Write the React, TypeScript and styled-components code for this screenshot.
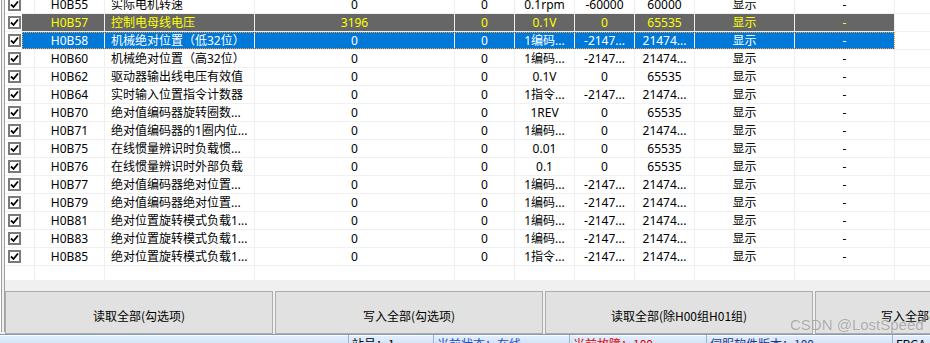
import styled, { createGlobalStyle } from "styled-components";

type RowState = "normal" | "marked" | "selected";

interface Param {
  code: string;
  name: string;
  value: string;
  def: string;
  unit: string;
  min: string;
  max: string;
  state?: RowState;
}

const params: Param[] = [
  { code: "H0B55", name: "实际电机转速", value: "0", def: "0", unit: "0.1rpm", min: "-60000", max: "60000" },
  { code: "H0B57", name: "控制电母线电压", value: "3196", def: "0", unit: "0.1V", min: "0", max: "65535", state: "marked" },
  { code: "H0B58", name: "机械绝对位置（低32位）", value: "0", def: "0", unit: "1编码...", min: "-2147...", max: "21474...", state: "selected" },
  { code: "H0B60", name: "机械绝对位置（高32位）", value: "0", def: "0", unit: "1编码...", min: "-2147...", max: "21474..." },
  { code: "H0B62", name: "驱动器输出线电压有效值", value: "0", def: "0", unit: "0.1V", min: "0", max: "65535" },
  { code: "H0B64", name: "实时输入位置指令计数器", value: "0", def: "0", unit: "1指令...", min: "-2147...", max: "21474..." },
  { code: "H0B70", name: "绝对值编码器旋转圈数...", value: "0", def: "0", unit: "1REV", min: "0", max: "65535" },
  { code: "H0B71", name: "绝对值编码器的1圈内位...", value: "0", def: "0", unit: "1编码...", min: "0", max: "21474..." },
  { code: "H0B75", name: "在线惯量辨识时负载惯...", value: "0", def: "0", unit: "0.01", min: "0", max: "65535" },
  { code: "H0B76", name: "在线惯量辨识时外部负载", value: "0", def: "0", unit: "0.1", min: "0", max: "65535" },
  { code: "H0B77", name: "绝对值编码器绝对位置...", value: "0", def: "0", unit: "1编码...", min: "-2147...", max: "21474..." },
  { code: "H0B79", name: "绝对值编码器绝对位置...", value: "0", def: "0", unit: "1编码...", min: "-2147...", max: "21474..." },
  { code: "H0B81", name: "绝对位置旋转模式负载1...", value: "0", def: "0", unit: "1编码...", min: "-2147...", max: "21474..." },
  { code: "H0B83", name: "绝对位置旋转模式负载1...", value: "0", def: "0", unit: "1编码...", min: "-2147...", max: "21474..." },
  { code: "H0B85", name: "绝对位置旋转模式负载1...", value: "0", def: "0", unit: "1指令...", min: "-2147...", max: "21474..." },
];

const buttons = ["读取全部(勾选项)", "写入全部(勾选项)", "读取全部(除H00组H01组)", "写入全部(除H00组H01组)"];

const GlobalStyle = createGlobalStyle`
  html, body {
    margin: 0;
    padding: 0;
    background: #f0f0f0;
    overflow: hidden;
  }
  body {
    font-family: "Noto Sans", "Noto Sans CJK SC", sans-serif;
  }
`;

const Window = styled.div`
  position: relative;
  width: 930px;
  height: 343px;
  overflow: hidden;
  display: flex;
  flex-direction: column;
  background: #f0f0f0;
`;

const Main = styled.div`
  display: flex;
  height: 334px;
  flex: none;
`;

const Frame = styled.div`
  width: 5px;
  flex: none;
  margin-bottom: 2px;
  box-shadow: inset 1px 0 #ffffff, inset 2px 0 #a0a0a0, inset -1px 0 #a0a0a0;
`;

const Content = styled.div`
  flex: 1;
  min-width: 0;
  display: flex;
  flex-direction: column;
`;

const ListView = styled.div`
  height: 280px;
  flex: none;
  background: #ffffff;
  overflow: hidden;
`;

/* list is scrolled by a few pixels */
const Scroller = styled.div`
  margin-top: -4px;
`;

const Row = styled.div`
  display: flex;
  height: 18px;
  box-sizing: border-box;
  border-bottom: 1px solid #f0f0f0;
`;

const CheckSlot = styled.div`
  width: 17px;
  flex: none;
  display: flex;
  align-items: center;
  padding-left: 3px;
  box-sizing: border-box;
`;

const CheckBox = styled.div`
  width: 13px;
  height: 13px;
  box-sizing: border-box;
  border: 2px solid #7a7a7a;
  background: #ffffff;
  display: flex;
  align-items: center;
  justify-content: center;

  svg {
    width: 9px;
    height: 9px;
  }
`;

const Body = styled.div<{ $state: RowState }>`
  display: flex;
  flex: none;
  height: 17px;
  background: ${({ $state }) =>
    $state === "selected" ? "#0078d7" : $state === "marked" ? "#666666" : "transparent"};
  color: ${({ $state }) =>
    $state === "selected" ? "#ffffff" : $state === "marked" ? "#ffff00" : "#000000"};
  outline: ${({ $state }) => ($state === "selected" ? "1px dotted #ff9a2e" : "none")};
  outline-offset: -1px;
`;

const Cell = styled.div<{ $w: number; $align?: "left" | "center"; $line?: boolean }>`
  width: ${({ $w }) => $w}px;
  flex: none;
  box-sizing: border-box;
  border-right: 1px solid ${({ $line = true }) => ($line ? "#f0f0f0" : "transparent")};
  padding: 0 ${({ $align }) => ($align === "left" ? "6px" : "0")};
  text-align: ${({ $align = "center" }) => $align};
  font-size: 12px;
  line-height: 17px;
  white-space: nowrap;
  overflow: hidden;
`;

const Filler = styled.div`
  flex: 1;
`;

const ButtonRow = styled.div`
  display: flex;
  gap: 2px;
  margin-top: 11px;
  height: 43px;
  flex: none;
  overflow: hidden;
`;

const Button = styled.button`
  width: 268px;
  height: 43px;
  flex: none;
  box-sizing: border-box;
  border: 1px solid #adadad;
  background: #e1e1e1;
  color: #000000;
  font-family: "Noto Sans CJK SC", sans-serif;
  font-size: 12px;
  padding: 6px 0 0;
  white-space: nowrap;
  cursor: pointer;
`;

const StatusBar = styled.div`
  flex: none;
  height: 9px;
  display: flex;
  border-top: 1px solid #7f9cc0;
  box-shadow: inset 0 1px #ffffff;
  background: linear-gradient(#e6f0fc, #d3e3f7);
  overflow: hidden;
  font-family: "Noto Sans CJK SC", sans-serif;
  font-size: 12px;
  line-height: 17px;
`;

const StatusPane = styled.div<{ $w?: number; $color?: string }>`
  width: ${({ $w }) => ($w ? `${$w}px` : "auto")};
  flex: ${({ $w }) => ($w ? "none" : "1")};
  box-sizing: border-box;
  padding-left: 3px;
  border-left: 1px solid #9db3d0;
  color: ${({ $color = "#000000" }) => $color};
  white-space: nowrap;
  overflow: hidden;

  &:first-child {
    border-left: none;
  }
`;

const Watermark = styled.div`
  position: absolute;
  left: 790px;
  top: 316px;
  font-family: "Liberation Sans", Arial, sans-serif;
  font-size: 15px;
  color: rgba(120, 120, 120, 0.6);
  text-shadow: 0 0 1px rgba(255, 255, 255, 0.8);
  pointer-events: none;
  white-space: nowrap;
`;

const CheckMark = () => (
  <svg viewBox="0 0 9 9">
    <path d="M1 4.5 L3.5 7 L8 1.5" fill="none" stroke="#000000" strokeWidth="1.8" />
  </svg>
);

const ParamRow = ({ p }: { p?: Param }) => {
  const state = p?.state ?? "normal";
  return (
    <Row>
      <CheckSlot>
        {p && (
          <CheckBox>
            <CheckMark />
          </CheckBox>
        )}
      </CheckSlot>
      <Body $state={state}>
        <Cell $w={13} $line={state === "normal"} />
        <Cell $w={70}>{p?.code}</Cell>
        <Cell $w={150} $align="left">
          {p?.name}
        </Cell>
        <Cell $w={200}>{p?.value}</Cell>
        <Cell $w={60}>{p?.def}</Cell>
        <Cell $w={60}>{p?.unit}</Cell>
        <Cell $w={60}>{p?.min}</Cell>
        <Cell $w={60}>{p?.max}</Cell>
        <Cell $w={100}>{p && "显示"}</Cell>
        <Cell $w={100}>{p && "-"}</Cell>
      </Body>
      <Filler />
    </Row>
  );
};

const App = () => {
  return (
    <>
      <GlobalStyle />
      <Window>
        <Main>
          <Frame />
          <Content>
            <ListView>
              <Scroller>
                {params.map((p) => (
                  <ParamRow key={p.code} p={p} />
                ))}
                <ParamRow />
              </Scroller>
            </ListView>
            <ButtonRow>
              {buttons.map((b) => (
                <Button key={b}>{b}</Button>
              ))}
            </ButtonRow>
          </Content>
        </Main>
        <StatusBar>
          <StatusPane $w={348} />
          <StatusPane $w={85}>站号：1</StatusPane>
          <StatusPane $w={136} $color="#1c4fc4">
            当前状态：在线
          </StatusPane>
          <StatusPane $w={137} $color="#e00000">
            当前故障：100
          </StatusPane>
          <StatusPane $w={186} $color="#1a3a8a">
            伺服软件版本：100
          </StatusPane>
          <StatusPane>FPGA</StatusPane>
        </StatusBar>
        <Watermark>CSDN @LostSpeed</Watermark>
      </Window>
    </>
  );
};

export default App;
